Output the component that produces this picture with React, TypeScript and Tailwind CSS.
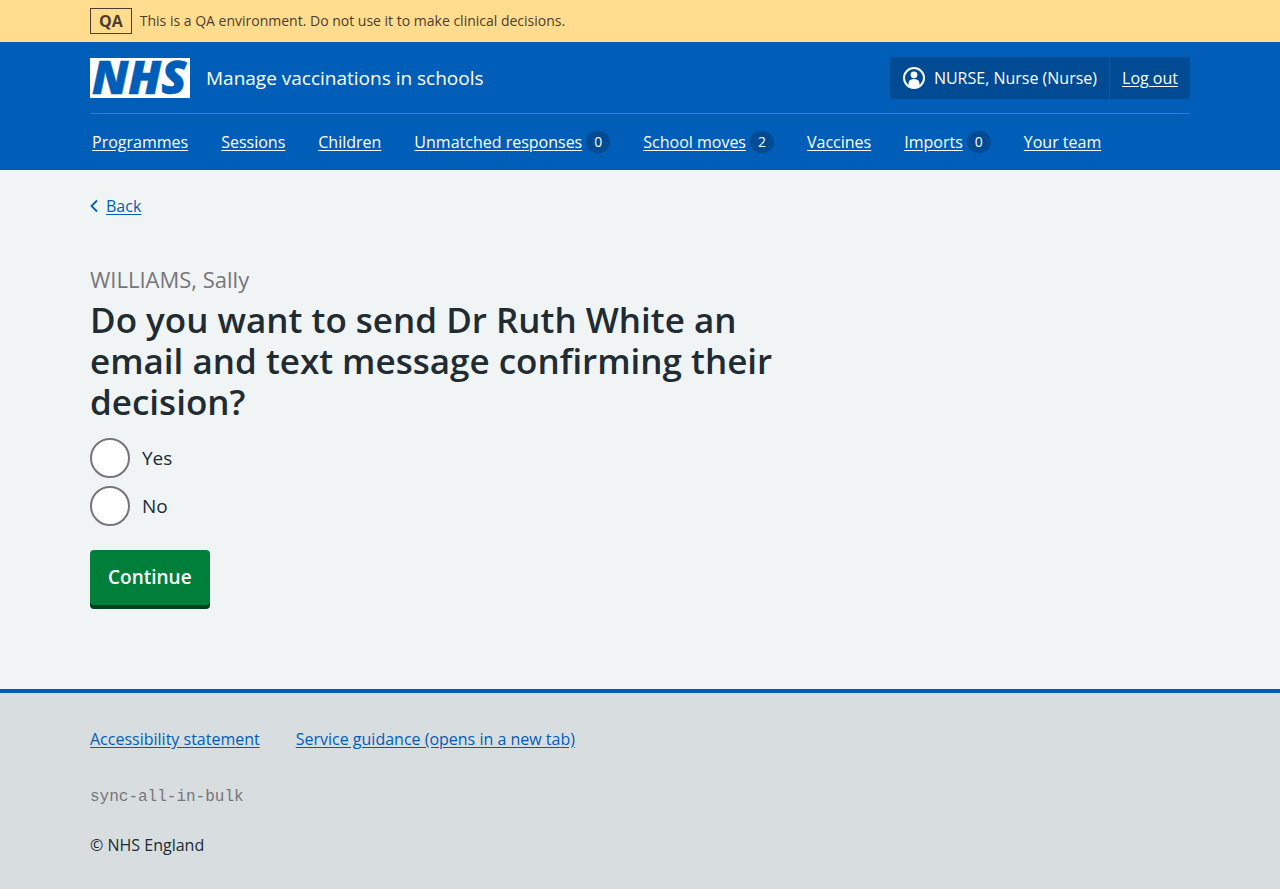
const NAV: { label: string; count?: number }[] = [
  { label: "Programmes" },
  { label: "Sessions" },
  { label: "Children" },
  { label: "Unmatched responses", count: 0 },
  { label: "School moves", count: 2 },
  { label: "Vaccines" },
  { label: "Imports", count: 0 },
  { label: "Your team" },
];

function Container({ children }: { children: React.ReactNode }) {
  return <div className="mx-auto w-full max-w-[1164px] px-8">{children}</div>;
}

function Logo() {
  return (
    <svg width="100" height="40" viewBox="0 0 100 40" role="img" aria-label="NHS" className="shrink-0 overflow-visible">
      <rect width="100" height="40" fill="#fff" />
      <text
        x="2"
        y="36"
        fill="#005eb8"
        stroke="#005eb8"
        strokeWidth="0.6"
        fontFamily="'Open Sans', sans-serif"
        fontSize="46"
        fontWeight="800"
        fontStyle="italic"
      >
        NHS
      </text>
    </svg>
  );
}

function UserIcon() {
  return (
    <svg width="24" height="24" viewBox="0 0 24 24" aria-hidden="true" className="shrink-0">
      <circle cx="12" cy="12" r="10" fill="none" stroke="#fff" strokeWidth="2" />
      <circle cx="12" cy="8.800" r="3.400" fill="#fff" />
      <path d="M6.500 20v-2.500a5.500 4.500 0 0 1 11 0V20a10 10 0 0 1-11 0z" fill="#fff" />
    </svg>
  );
}

function Radio({ id, label }: { id: string; label: string }) {
  return (
    <div className="flex items-center gap-3">
      <input
        type="radio"
        id={id}
        name="notify"
        className="size-10 shrink-0 appearance-none rounded-full border-2 border-[#77757c] bg-white checked:shadow-[inset_0_0_0_8px_white] checked:bg-[#212b32]"
      />
      <label htmlFor={id} className="text-[19px] leading-7">
        {label}
      </label>
    </div>
  );
}

export default function App() {
  return (
    <div className="flex min-h-screen flex-col bg-[#d8dde0] font-['Open_Sans',sans-serif] text-base text-[#212b32]">
      <div className="bg-[#ffdc8e] py-2 text-[#4d3c2f]">
        <Container>
          <div className="flex items-center gap-2">
            <strong className="border border-[#4d3c2f] px-2 text-base leading-6 font-bold">QA</strong>
            <span className="text-sm leading-6">This is a QA environment. Do not use it to make clinical decisions.</span>
          </div>
        </Container>
      </div>

      <header className="bg-[#005eb8] text-white">
        <Container>
          <div className="flex items-center justify-between border-b border-white/20 pt-[15px] pb-3.5">
            <a href="#" className="flex items-center gap-4 text-[19px] leading-7">
              <Logo />
              Manage vaccinations in schools
            </a>
            <div className="flex h-[42px] rounded bg-[#004b93]">
              <span className="flex items-center gap-2 border-r border-[#005eb8] px-3">
                <UserIcon />
                NURSE, Nurse (Nurse)
              </span>
              <a href="#" className="flex items-center px-3 underline underline-offset-2">
                Log out
              </a>
            </div>
          </div>
          <nav className="flex h-14 items-center gap-[33px] px-0.5">
            {NAV.map(({ label, count }) => (
              <a key={label} href="#" className="flex items-center gap-1 whitespace-nowrap">
                <span className="underline underline-offset-2">{label}</span>
                {count !== undefined && (
                  <span className="flex h-[22px] w-6 items-center justify-center rounded-full bg-[#004b93] text-sm">
                    {count}
                  </span>
                )}
              </a>
            ))}
          </nav>
        </Container>
      </header>

      <main className="bg-[#f0f4f5] pt-6 pb-20">
        <Container>
          <a href="#" className="inline-flex items-center gap-2 leading-6 text-[#005eb8]">
            <svg width="8" height="14" viewBox="0 0 8 14" aria-hidden="true">
              <path d="M7 1.500 1.500 7 7 12.500" fill="none" stroke="currentColor" strokeWidth="1.800" />
            </svg>
            <span className="underline underline-offset-2">Back</span>
          </a>
          <form className="mt-11" onSubmit={(e) => e.preventDefault()}>
            <fieldset>
              <legend className="max-w-[720px]">
                <span className="mb-1 block text-[22px] leading-8 text-[#77757c]">WILLIAMS, Sally</span>
                <h1 className="text-[35px] leading-[41px] font-semibold">
                  Do you want to send Dr Ruth White an email and text message confirming their decision?
                </h1>
              </legend>
              <div className="mt-4 flex flex-col gap-2">
                <Radio id="notify-yes" label="Yes" />
                <Radio id="notify-no" label="No" />
              </div>
            </fieldset>
            <button
              type="submit"
              className="mt-6 mb-1 rounded bg-[#007f3b] px-[18px] py-3.5 text-[19px] leading-[27px] font-semibold text-white shadow-[0_4px_0_#00401e]"
            >
              Continue
            </button>
          </form>
        </Container>
      </main>

      <footer className="border-t-4 border-[#005eb8] pt-[34px] pb-8">
        <Container>
          <div className="flex gap-9 leading-6 text-[#005eb8]">
            <a href="#" className="underline underline-offset-2">Accessibility statement</a>
            <a href="#" className="underline underline-offset-2">Service guidance (opens in a new tab)</a>
          </div>
          <p className="mt-[34px] font-['Liberation_Mono',monospace] leading-6 text-[#77757c]">sync-all-in-bulk</p>
          <p className="mt-6 leading-6">© NHS England</p>
        </Container>
      </footer>
    </div>
  );
}
